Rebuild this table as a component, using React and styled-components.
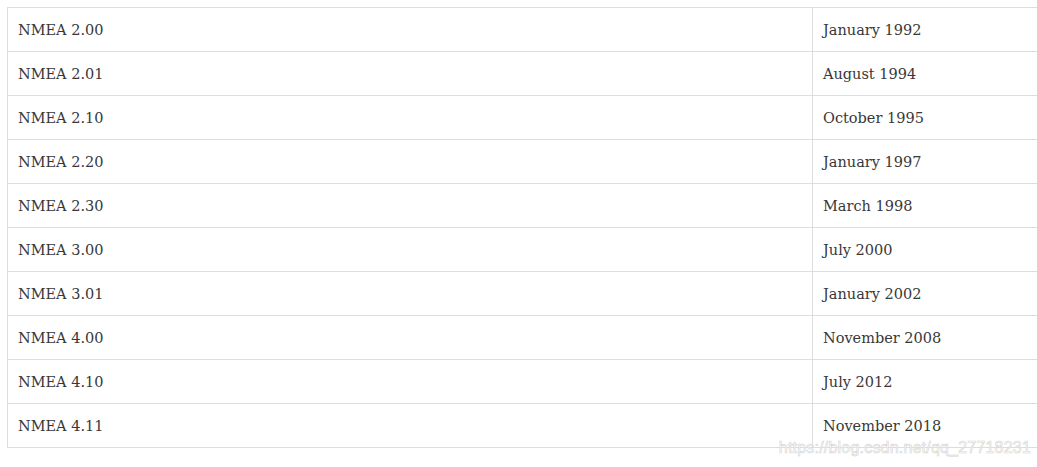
import React from 'react';
import styled, { createGlobalStyle } from 'styled-components';

const GlobalStyle = createGlobalStyle`
  html, body {
    margin: 0;
    padding: 0;
    background: #fff;
    overflow: hidden;
  }
`;

const Page = styled.div`
  position: relative;
  width: 1037px;
  height: 467px;
  padding: 7px 0 0 7px;
  box-sizing: border-box;
  overflow: hidden;
`;

const Table = styled.table`
  border-collapse: collapse;
  width: 1060px;
  font-family: 'DejaVu Serif', 'Liberation Serif', serif;
  font-size: 14.5px;
  color: #383838;
`;

const Cell = styled.td`
  border: 1px solid #ddd;
  padding: 11px 10px 9px;
  height: 23px;
  line-height: 23px;
  width: ${(p) => (p.$wide ? '784px' : 'auto')};
  white-space: nowrap;
`;

const Watermark = styled.div`
  position: absolute;
  right: 6px;
  bottom: 10px;
  font-family: 'Liberation Sans', Arial, sans-serif;
  font-size: 16px;
  color: rgba(255, 255, 255, 0.85);
  -webkit-text-stroke: 0.6px #d4d4d4;
  letter-spacing: 0.2px;
`;

const rows = [
  ['NMEA 2.00', 'January 1992'],
  ['NMEA 2.01', 'August 1994'],
  ['NMEA 2.10', 'October 1995'],
  ['NMEA 2.20', 'January 1997'],
  ['NMEA 2.30', 'March 1998'],
  ['NMEA 3.00', 'July 2000'],
  ['NMEA 3.01', 'January 2002'],
  ['NMEA 4.00', 'November 2008'],
  ['NMEA 4.10', 'July 2012'],
  ['NMEA 4.11', 'November 2018'],
];

const App = () => (
  <Page>
    <GlobalStyle />
    <Table>
      <tbody>
        {rows.map(([ver, date]) => (
          <tr key={ver}>
            <Cell $wide>{ver}</Cell>
            <Cell>{date}</Cell>
          </tr>
        ))}
      </tbody>
    </Table>
    <Watermark>https://blog.csdn.net/qq_27718231</Watermark>
  </Page>
);

export default App;
